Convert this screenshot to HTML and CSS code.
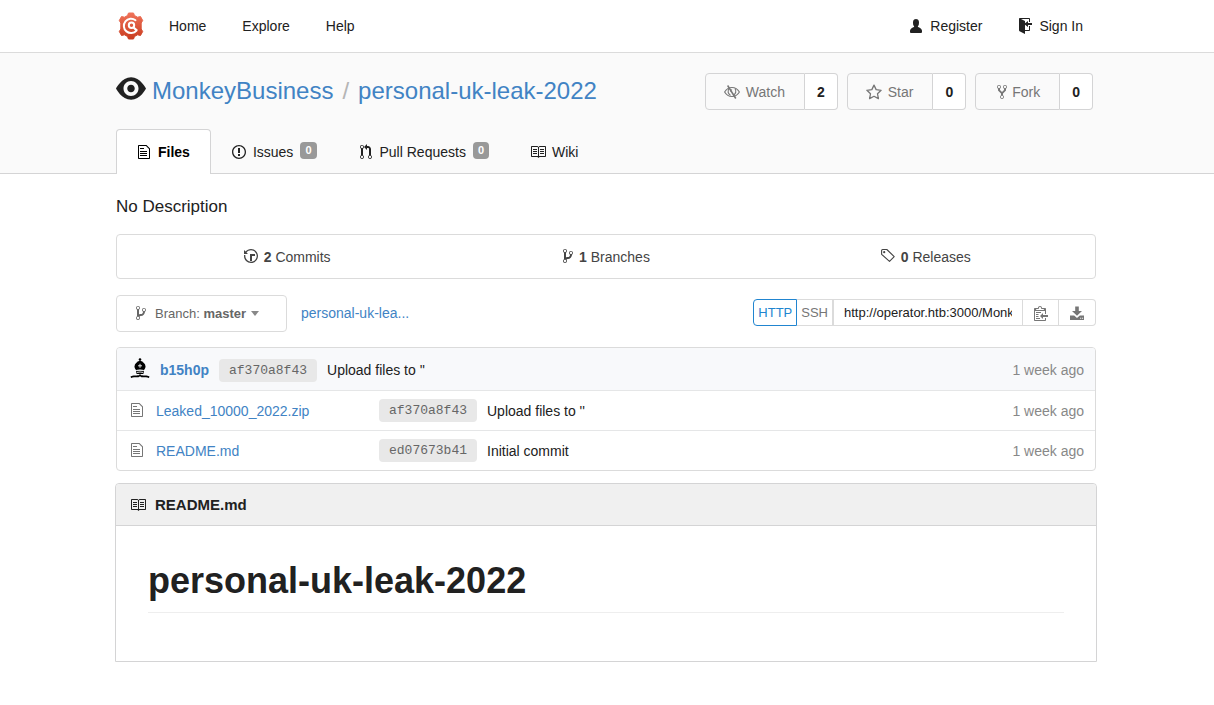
FILE: index.html
```html
<!DOCTYPE html>
<html lang="en">
<head>
<meta charset="UTF-8">
<meta name="viewport" content="width=device-width, initial-scale=1">
<title>MonkeyBusiness/personal-uk-leak-2022 - Gogs</title>
<link rel="stylesheet" href="styles.css">
</head>
<body>

<!-- icon sprite -->
<svg class="sprite" aria-hidden="true">
  <symbol id="i-file" viewBox="0 0 12 16"><path d="M6 5H2V4h4v1zM2 8h7V7H2v1zm0 2h7V9H2v1zm0 2h7v-1H2v1zm10-7.5V14c0 .55-.45 1-1 1H1c-.55 0-1-.45-1-1V2c0-.55.45-1 1-1h7.5L12 4.5zM11 5L8 2H1v12h10V5z"/></symbol>
  <symbol id="i-issue" viewBox="0 0 14 16"><path d="M7 2.3c3.14 0 5.7 2.56 5.7 5.7s-2.56 5.7-5.7 5.7A5.71 5.71 0 0 1 1.3 8c0-3.14 2.56-5.7 5.7-5.7zM7 1C3.14 1 0 4.14 0 8s3.14 7 7 7 7-3.14 7-7-3.14-7-7-7zm1 3H6v5h2V4zm0 6H6v2h2v-2z"/></symbol>
  <symbol id="i-pull" viewBox="0 0 12 16"><path d="M11 11.28V5c-.03-.78-.34-1.47-.94-2.06C9.46 2.35 8.78 2.03 8 2H7V0L4 3l3 3V4h1c.27.02.48.11.69.31.21.2.3.42.31.69v6.28A1.993 1.993 0 0 0 10 15a1.993 1.993 0 0 0 1-3.72zm-1 2.92c-.66 0-1.2-.55-1.2-1.2 0-.65.55-1.2 1.2-1.2.65 0 1.2.55 1.2 1.2 0 .65-.55 1.2-1.2 1.2zM4 3c0-1.11-.89-2-2-2a1.993 1.993 0 0 0-1 3.72v6.56A1.993 1.993 0 0 0 2 15a1.993 1.993 0 0 0 1-3.72V4.72c.59-.34 1-.98 1-1.72zm-.8 10c0 .66-.55 1.2-1.2 1.2-.65 0-1.2-.55-1.2-1.2 0-.65.55-1.2 1.2-1.2.65 0 1.2.55 1.2 1.2zM2 4.2C1.34 4.2.8 3.65.8 3c0-.65.55-1.2 1.2-1.2.65 0 1.2.55 1.2 1.2 0 .65-.55 1.2-1.2 1.2z"/></symbol>
  <symbol id="i-book" viewBox="0 0 16 16"><path d="M3 5h4v1H3V5zm0 3h4V7H3v1zm0 2h4V9H3v1zm11-5h-4v1h4V5zm0 2h-4v1h4V7zm0 2h-4v1h4V9zm2-6v9c0 .55-.45 1-1 1H9.5l-1 1-1-1H2c-.55 0-1-.45-1-1V3c0-.55.45-1 1-1h5.5l1 1 1-1H15c.55 0 1 .45 1 1zm-8 .5L7.5 3H2v9h6V3.5zm7-.5H9.5l-.5.5V12h6V3z"/></symbol>
  <symbol id="i-history" viewBox="0 0 14 16"><path d="M8 13H6V6h5v2H8v5zM7 1C4.81 1 2.87 2.02 1.59 3.59L0 2v4h4L2.5 4.5C3.55 3.17 5.17 2.3 7 2.3c3.14 0 5.7 2.56 5.7 5.7s-2.56 5.7-5.7 5.7A5.71 5.71 0 0 1 1.3 8c0-.34.03-.67.09-1H.08C.03 7.33 0 7.66 0 8c0 3.86 3.14 7 7 7s7-3.14 7-7-3.14-7-7-7z"/></symbol>
  <symbol id="i-branch" viewBox="0 0 10 16"><path d="M10 5c0-1.11-.89-2-2-2a1.993 1.993 0 0 0-1 3.72v.3c-.02.52-.23.98-.63 1.38-.4.4-.86.61-1.38.63-.83.02-1.48.16-2 .45V4.72a1.993 1.993 0 0 0-1-3.72C.88 1 0 1.89 0 3a2 2 0 0 0 1 1.72v6.56c-.59.35-1 .99-1 1.72 0 1.11.89 2 2 2 1.11 0 2-.89 2-2 0-.53-.2-1-.53-1.36.09-.06.48-.41.59-.47.25-.11.56-.17.94-.17 1.05-.05 1.95-.45 2.75-1.25S8.95 7.77 9 6.73h-.02C9.59 6.37 10 5.73 10 5zM2 1.8c.66 0 1.2.55 1.2 1.2 0 .65-.55 1.2-1.2 1.2C1.35 4.2.8 3.65.8 3c0-.65.55-1.2 1.2-1.2zm0 12.41c-.66 0-1.2-.55-1.2-1.2 0-.65.55-1.2 1.2-1.2.65 0 1.2.55 1.2 1.2 0 .65-.55 1.2-1.2 1.2zm6-8c-.66 0-1.2-.55-1.2-1.2 0-.65.55-1.2 1.2-1.2.65 0 1.2.55 1.2 1.2 0 .65-.55 1.2-1.2 1.2z"/></symbol>
  <symbol id="i-fork" viewBox="0 0 10 16"><path d="M8 1a1.993 1.993 0 0 0-1 3.72V6L5 8 3 6V4.72A1.993 1.993 0 0 0 2 1a1.993 1.993 0 0 0-1 3.72V6.5l3 3v1.78A1.993 1.993 0 0 0 5 15a1.993 1.993 0 0 0 1-3.72V9.5l3-3V4.72A1.993 1.993 0 0 0 8 1zM2 4.2C1.34 4.2.8 3.65.8 3c0-.65.55-1.2 1.2-1.2.65 0 1.2.55 1.2 1.2 0 .65-.55 1.2-1.2 1.2zm3 10c-.66 0-1.2-.55-1.2-1.2 0-.65.55-1.2 1.2-1.2.65 0 1.2.55 1.2 1.2 0 .65-.55 1.2-1.2 1.2zm3-10c-.66 0-1.2-.55-1.2-1.2 0-.65.55-1.2 1.2-1.2.65 0 1.2.55 1.2 1.2 0 .65-.55 1.2-1.2 1.2z"/></symbol>
  <symbol id="i-person" viewBox="0 0 12 16"><path d="M12 14.002a.998.998 0 0 1-.998.998H1.001A1 1 0 0 1 0 13.999V13c0-2.633 4-4 4-4s.229-.409 0-1c-.841-.62-.944-1.59-1-4 .173-2.413 1.867-3 3-3s2.827.586 3 3c-.056 2.41-.159 3.38-1 4-.229.59 0 1 0 1s4 1.367 4 4v1.002z"/></symbol>
  <symbol id="i-signin" viewBox="0 0 14 16"><path d="M7 6.75V12h4V8h1v4c0 .55-.45 1-1 1H7v3l-5.45-2.72c-.33-.17-.55-.52-.55-.91V1c0-.55.45-1 1-1h9c.55 0 1 .45 1 1v3h-1V1H3l4 2v2.25L10 3v2h4v2h-4v2L7 6.75z"/></symbol>
  <symbol id="i-eye" viewBox="0 2 16 12"><path d="M8.06 2C3 2 0 8 0 8s3 6 8.06 6C13 14 16 8 16 8s-3-6-7.94-6zM8 12c-2.2 0-4-1.78-4-4 0-2.2 1.8-4 4-4 2.22 0 4 1.8 4 4 0 2.22-1.78 4-4 4zm2-4c0 1.11-.89 2-2 2-1.11 0-2-.89-2-2 0-1.11.89-2 2-2 1.11 0 2 .89 2 2z"/></symbol>
  <symbol id="i-unwatch" viewBox="0 0 16 16"><g fill="none" stroke="currentColor" stroke-width="1.1"><path d="M.6 8C2.300 5.100 5 3.500 8 3.500s5.700 1.600 7.400 4.500c-1.700 2.900-4.400 4.500-7.400 4.500S2.300 10.900.6 8z"/><path d="M5 4.600c-1.500 2.600-.9 5.200 1.500 6.800M11 4.600c1.400 2.600.7 5.200-1.600 6.600M6.400 7.400c0-1 .7-1.700 1.700-1.700"/><path stroke-width="1.500" d="M3.600 1.500l8.200 13"/></g></symbol>
  <symbol id="i-star" viewBox="0 0 16 16"><path d="M8 1.100l2.150 4.500 4.950.7-3.600 3.450.9 4.900L8 12.300l-4.400 2.350.9-4.900L.9 6.300l4.950-.7z" fill="none" stroke="currentColor" stroke-width="1.300" stroke-linejoin="round"/></symbol>
  <symbol id="i-tag" viewBox="0 0 14 16"><path d="M.600 2.500c0-.6.4-1 1-1h4.200l7.400 7.100-4.700 4.700L.600 6.300z" fill="none" stroke="currentColor" stroke-width="1.100" stroke-linejoin="round"/><circle cx="3.200" cy="4.200" r="1.100"/></symbol>
  <symbol id="i-clippy" viewBox="0 0 14 16"><path d="M2 13h4v1H2v-1zm5-6H2v1h5V7zm2 3V8l-3 3 3 3v-2h5v-2H9zM4.500 9H2v1h2.500V9zM2 12h2.500v-1H2v1zm9 1h1v2c-.02.280-.110.520-.300.700-.190.180-.420.280-.700.300H1c-.550 0-1-.450-1-1V4c0-.550.450-1 1-1h3c0-1.110.890-2 2-2 1.110 0 2 .890 2 2h3c.550 0 1 .450 1 1v5h-1V6H1v9h10v-2zM2 5h8c0-.550-.450-1-1-1H8c-.550 0-1-.450-1-1s-.450-1-1-1-1 .450-1 1-.450 1-1 1H3c-.550 0-1 .450-1 1z"/></symbol>
  <symbol id="i-download" viewBox="0 0 14 16"><path d="M5.200 1.500h3.600V6H12L7 10.800 2 6h3.200zM0 10.500h4.200L7 13l2.800-2.500H14V15H0zm10.200 2.300v1h1v-1zm1.900 0v1h1v-1z" fill-rule="evenodd"/></symbol>
</svg>

<nav class="navbar">
  <div class="container navbar-inner">
    <a class="brand" href="#" aria-label="Gogs">
      <svg width="26" height="28" viewBox="0 0 26 28">
        <defs><linearGradient id="gear" x1="0" y1="0" x2="0" y2="1"><stop offset="0" stop-color="#f0735a"/><stop offset="1" stop-color="#c93c1f"/></linearGradient></defs>
        <path fill="url(#gear)" stroke="url(#gear)" stroke-width="1" stroke-linejoin="round" d="M10.500 1h5l1 2.500 3 1.700 3-.7 2.200 4-1.500 2.500v6l1.500 2.500-2.200 4-3-.7-3 1.700-1 2.500h-5l-1-2.500-3-1.700-3 .7-2.200-4 1.500-2.500v-6L1.300 8.500l2.200-4 3 .7 3-1.700z"/>
        <path fill="none" stroke="#fff" stroke-width="2" stroke-linecap="round" d="M17.500 8.200a7.200 7.200 0 1 0 1 10.400"/>
        <circle cx="13.500" cy="13.200" r="2.700" fill="none" stroke="#fff" stroke-width="2"/>
        <path fill="none" stroke="#fff" stroke-width="2.200" d="M15 15l4 3.600"/>
      </svg>
    </a>
    <a class="nav-item" href="#">Home</a>
    <a class="nav-item" href="#">Explore</a>
    <a class="nav-item" href="#">Help</a>
    <div class="nav-right">
      <a class="nav-item" href="#"><svg class="icon"><use href="#i-person"/></svg>Register</a>
      <a class="nav-item" href="#"><svg class="icon"><use href="#i-signin"/></svg>Sign In</a>
    </div>
  </div>
</nav>

<header class="repo-header">
  <div class="container">
    <div class="repo-top">
      <h1 class="repo-title">
        <svg class="mega-icon"><use href="#i-eye"/></svg>
        <a href="#">MonkeyBusiness</a>
        <span class="divider">/</span>
        <a href="#">personal-uk-leak-2022</a>
      </h1>
      <div class="repo-actions">
        <div class="labeled-button">
          <button class="action" type="button"><svg class="icon"><use href="#i-unwatch"/></svg>Watch</button>
          <a class="count" href="#">2</a>
        </div>
        <div class="labeled-button">
          <button class="action" type="button"><svg class="icon"><use href="#i-star"/></svg>Star</button>
          <a class="count" href="#">0</a>
        </div>
        <div class="labeled-button">
          <button class="action fork" type="button"><svg class="icon"><use href="#i-fork"/></svg>Fork</button>
          <a class="count" href="#">0</a>
        </div>
      </div>
    </div>
    <div class="tabs">
      <a class="tab active" href="#"><svg class="icon"><use href="#i-file"/></svg>Files</a>
      <a class="tab" href="#"><svg class="icon"><use href="#i-issue"/></svg>Issues <span class="badge">0</span></a>
      <a class="tab" href="#"><svg class="icon"><use href="#i-pull"/></svg>Pull Requests <span class="badge">0</span></a>
      <a class="tab" href="#"><svg class="icon"><use href="#i-book"/></svg>Wiki</a>
    </div>
  </div>
</header>

<main class="container">
  <p class="description">No Description</p>

  <div class="stats">
    <a href="#"><svg class="icon"><use href="#i-history"/></svg><span><b>2</b> Commits</span></a>
    <a href="#"><svg class="icon narrow"><use href="#i-branch"/></svg><span><b>1</b> Branches</span></a>
    <a href="#"><svg class="icon"><use href="#i-tag"/></svg><span><b>0</b> Releases</span></a>
  </div>

  <div class="toolbar">
    <button class="branch-btn" type="button">
      <svg class="icon"><use href="#i-branch"/></svg>
      <span>Branch: <b>master</b></span>
      <i class="caret"></i>
    </button>
    <a class="breadcrumb" href="#">personal-uk-lea...</a>
    <div class="clone">
      <button class="proto active" type="button">HTTP</button>
      <button class="proto" type="button">SSH</button>
      <input class="clone-url" type="text" aria-label="Clone URL" value="http://operator.htb:3000/MonkeyBusiness/personal-uk-leak-2022.git" readonly>
      <button class="tool" type="button" aria-label="Copy"><svg class="icon"><use href="#i-clippy"/></svg></button>
      <button class="tool" type="button" aria-label="Download"><svg class="icon"><use href="#i-download"/></svg></button>
    </div>
  </div>

  <table class="files">
    <thead>
      <tr>
        <th colspan="3">
          <div class="commit">
            <svg class="avatar" viewBox="0 0 20 20">
              <circle cx="10" cy="1.500" r="1.300"/>
              <path d="M10 2.500c3 1.200 5.500 3.300 5.500 6 0 1.600-.8 2.700-1.700 3.600H6.200c-.9-.9-1.700-2-1.700-3.600 0-2.700 2.500-4.800 5.500-6z"/>
              <path d="M6 12.800h8l-.6 3.200H6.600z"/>
              <path d="M10 15.500c.3 2 1.800 1.900 4 1.900 2 0 3.600-.2 5.500 1l-.6 1.500c-2-1-3.300-.6-5.200-.6-1.900 0-2.900 0-3.700-1-.8 1-1.800 1-3.700 1s-3.200-.4-5.200.6l-.6-1.500c1.900-1.200 3.500-1 5.500-1 2.200 0 3.700.1 4-1.900z"/>
              <path stroke="#f8f9fa" stroke-width=".9" fill="none" d="M10 5.800v4M8 7.800h4M6.500 12.400q3.500-1 7 0M7 14.400q3-.8 6 0"/>
            </svg>
            <a class="author" href="#">b15h0p</a>
            <a class="sha" href="#">af370a8f43</a>
            <span>Upload files to ''</span>
          </div>
        </th>
        <th class="age">1 week ago</th>
      </tr>
    </thead>
    <tbody>
      <tr>
        <td class="name"><svg class="icon"><use href="#i-file"/></svg><a href="#">Leaked_10000_2022.zip</a></td>
        <td class="hash"><a class="sha" href="#">af370a8f43</a></td>
        <td class="message">Upload files to ''</td>
        <td class="age">1 week ago</td>
      </tr>
      <tr>
        <td class="name"><svg class="icon"><use href="#i-file"/></svg><a href="#">README.md</a></td>
        <td class="hash"><a class="sha" href="#">ed07673b41</a></td>
        <td class="message">Initial commit</td>
        <td class="age">1 week ago</td>
      </tr>
    </tbody>
  </table>

  <section class="readme">
    <h4 class="readme-header"><svg class="icon"><use href="#i-book"/></svg>README.md</h4>
    <div class="readme-body">
      <h1>personal-uk-leak-2022</h1>
    </div>
  </section>
</main>

</body>
</html>
```
FILE: styles.css
```css
* {
  box-sizing: border-box;
}

body {
  margin: 0;
  background: #fff;
  color: #212121;
  font-family: "Liberation Sans", Arial, sans-serif;
  font-size: 14px;
  line-height: 20px;
}

a {
  color: #4183c4;
  text-decoration: none;
}

button,
input {
  font-family: inherit;
  margin: 0;
}

button {
  cursor: pointer;
}

.sprite {
  display: none;
}

.icon {
  width: 16px;
  height: 16px;
  flex: none;
  fill: currentColor;
}

.container {
  max-width: 982px;
  margin: 0 auto;
  padding-right: 2px;
}

/* Top navigation */
.navbar {
  border-bottom: 1px solid #dbdbdb;
}

.navbar-inner {
  display: flex;
  align-items: center;
  height: 52px;
}

.brand {
  display: flex;
  padding: 0 7px 0 2px;
}

.nav-item {
  display: flex;
  align-items: center;
  gap: 7px;
  padding: 0 18px;
  color: #212121;
}

.nav-right {
  display: flex;
  margin-left: auto;
  padding-right: 2px;
}

.nav-right .nav-item {
  gap: 6px;
  padding: 0 11px 0 24px;
}

/* Repository header */
.repo-header {
  background: #fafafa;
  border-bottom: 1px solid #d4d4d5;
}

.repo-top {
  display: flex;
  justify-content: space-between;
  height: 76px;
  padding: 20px 3px 0 0;
}

.repo-title {
  display: flex;
  align-items: center;
  height: 36px;
  margin: 0;
  font-size: 24px;
  font-weight: normal;
}

.mega-icon {
  width: 30px;
  height: 23px;
  margin: 0 6px 6px 0;
  fill: #212121;
}

.divider {
  margin: 0 9px;
  color: #b5b5b5;
}

.repo-actions {
  display: flex;
  gap: 9px;
}

.labeled-button {
  display: flex;
  height: 37px;
}

.action {
  display: flex;
  align-items: center;
  gap: 6px;
  padding: 0 19px 0 18px;
  border: 1px solid #d4d4d5;
  border-radius: 4px 0 0 4px;
  background: #fafafa;
  color: #767676;
  font-size: 14px;
}

.action.fork {
  gap: 2px;
}

.count {
  display: flex;
  align-items: center;
  padding: 0 12px;
  border: 1px solid #d4d4d5;
  border-left: 0;
  border-radius: 0 4px 4px 0;
  background: #fff;
  color: #212121;
  font-weight: bold;
}

.tabs {
  display: flex;
  height: 45px;
  margin-bottom: -1px;
}

.tab {
  display: flex;
  align-items: center;
  gap: 6px;
  padding: 0 20px 0 19px;
  border: 1px solid transparent;
  border-bottom: 0;
  color: #212121;
}

.tab.active {
  border-color: #d4d4d5;
  border-radius: 4px 4px 0 0;
  background: #fff;
  color: #000;
  font-weight: bold;
}

.badge {
  margin: 0 0 3px 1px;
  padding: 0 5px;
  border-radius: 4px;
  background: #999;
  color: #fff;
  font-size: 11px;
  font-weight: bold;
  line-height: 17px;
}

/* Repository home */
.description {
  margin: 23px 0 17px;
  font-size: 17px;
}

.stats {
  display: flex;
  padding: 0 10px;
  border: 1px solid #dbdbdb;
  border-radius: 4px;
}

.stats a {
  display: flex;
  flex: 1;
  align-items: center;
  justify-content: center;
  gap: 5px;
  height: 43px;
  color: #444;
}

.stats .icon {
  margin-bottom: 2px;
}

.stats .narrow {
  width: 12px;
}

.toolbar {
  display: flex;
  align-items: center;
  margin: 16px 0 15px;
}

.branch-btn {
  display: flex;
  align-items: center;
  width: 171px;
  height: 37px;
  padding: 0 16px;
  border: 1px solid #dbdbdb;
  border-radius: 4px;
  background: #fff;
  color: #666;
  font-size: 13px;
}

.branch-btn .icon {
  margin: 0 6px 2px 0;
}

.caret {
  margin-left: 5px;
  border: 4px solid transparent;
  border-top: 5px solid #888;
  border-bottom: 0;
}

.breadcrumb {
  margin: 0 0 2px 14px;
}

.clone {
  display: flex;
  height: 27px;
  margin: 0 0 2px auto;
}

.proto,
.tool {
  border: 1px solid #dbdbdb;
  border-left: 0;
  background: #fff;
  color: #767676;
  font-size: 13px;
  padding: 0 4px;
}

.proto.active {
  border: 1px solid #2185d0;
  border-radius: 4px 0 0 4px;
  color: #2185d0;
}

.clone-url {
  width: 190px;
  padding: 0 10px;
  border: 1px solid #dbdbdb;
  color: #212121;
  font-size: 13px;
}

.tool {
  display: flex;
  align-items: center;
  justify-content: center;
  width: 36px;
}

.tool:last-child {
  width: 37px;
  border-radius: 0 4px 4px 0;
}

/* File list */
.files {
  width: 100%;
  border: 1px solid #dbdbdb;
  border-radius: 4px;
  border-spacing: 0;
  overflow: hidden;
}

.files th,
.files td {
  height: 40px;
  padding: 0;
  border-top: 1px solid #e5e6e7;
  font-weight: normal;
  text-align: left;
}

.files th {
  height: 42px;
  padding-top: 2px;
  border-top: 0;
  background: #f8f9fb;
}

.commit {
  display: flex;
  align-items: center;
  padding-left: 13px;
  gap: 10px;
}

.avatar {
  width: 20px;
  height: 20px;
  margin-bottom: 4px;
}

.author {
  font-weight: bold;
}

.sha {
  display: inline-block;
  padding: 1px 10px 0;
  border-radius: 4px;
  background: #e8e8e8;
  color: #666;
  font-family: "Liberation Mono", monospace;
  font-size: 13px;
  line-height: 22px;
}

.files .name {
  width: 262px;
  padding-left: 12px;
}

.name .icon {
  margin: 0 11px 2px 0;
  color: #767676;
  vertical-align: middle;
}

.name a {
  vertical-align: middle;
}

.files .hash {
  width: 108px;
}

.files .age {
  width: 120px;
  padding-right: 11px;
  color: #888;
  text-align: right;
}

/* Readme */
.readme {
  margin: 12px -1px 0;
  border: 1px solid #d4d4d5;
  border-radius: 4px 4px 0 0;
}

.readme-header {
  display: flex;
  align-items: center;
  gap: 9px;
  height: 42px;
  margin: 0;
  padding-left: 14px;
  border-bottom: 1px solid #d4d4d5;
  border-radius: 4px 4px 0 0;
  background: #f0f0f0;
  font-size: 15px;
}

.readme-body {
  padding: 32px 32px 48px;
}

.readme-body h1 {
  margin: 0;
  padding-bottom: 8px;
  border-bottom: 1px solid #eee;
  font-size: 36px;
  line-height: 46px;
}

@media (max-width: 992px) {
  .container {
    padding: 0 12px;
  }

  .repo-top,
  .toolbar {
    flex-wrap: wrap;
    height: auto;
    gap: 12px;
  }
}
```
